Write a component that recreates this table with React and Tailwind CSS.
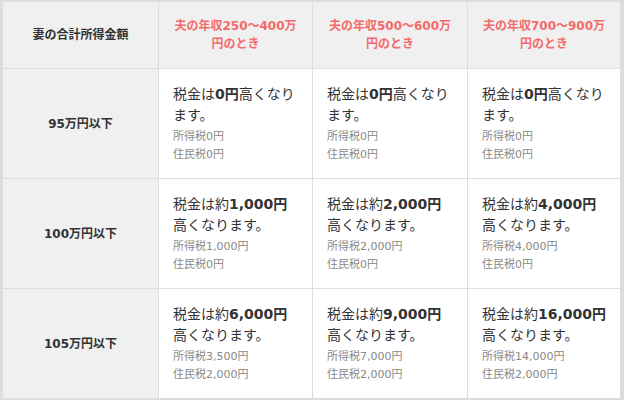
import React from 'react'

const headers = ['夫の年収250～400万', '夫の年収500～600万', '夫の年収700～900万']

const rows = [
  {
    label: '95万円以下',
    cells: [
      { pre: '税金は', amount: '0円', rest: '高くなり', line2: 'ます。', income: '0円', resident: '0円' },
      { pre: '税金は', amount: '0円', rest: '高くなり', line2: 'ます。', income: '0円', resident: '0円' },
      { pre: '税金は', amount: '0円', rest: '高くなり', line2: 'ます。', income: '0円', resident: '0円' },
    ],
  },
  {
    label: '100万円以下',
    cells: [
      { pre: '税金は約', amount: '1,000円', rest: '', line2: '高くなります。', income: '1,000円', resident: '0円' },
      { pre: '税金は約', amount: '2,000円', rest: '', line2: '高くなります。', income: '2,000円', resident: '0円' },
      { pre: '税金は約', amount: '4,000円', rest: '', line2: '高くなります。', income: '4,000円', resident: '0円' },
    ],
  },
  {
    label: '105万円以下',
    cells: [
      { pre: '税金は約', amount: '6,000円', rest: '', line2: '高くなります。', income: '3,500円', resident: '2,000円' },
      { pre: '税金は約', amount: '9,000円', rest: '', line2: '高くなります。', income: '7,000円', resident: '2,000円' },
      { pre: '税金は約', amount: '16,000円', rest: '', line2: '高くなります。', income: '14,000円', resident: '2,000円' },
    ],
  },
]

const TaxCell = ({ cell }) => (
  <div className="bg-white flex items-center pl-[14px]">
    <div className="whitespace-nowrap">
      <p className="text-[14px] leading-[21px] text-[#333]">
        {cell.pre}
        <span className="font-bold">{cell.amount}</span>
        {cell.rest}
      </p>
      <p className="text-[14px] leading-[21px] text-[#333]">{cell.line2}</p>
      <div className="mt-[2px]">
        <p className="text-[11px] leading-[18px] text-[#888]">所得税{cell.income}</p>
        <p className="text-[11px] leading-[18px] text-[#888]">住民税{cell.resident}</p>
      </div>
    </div>
  </div>
)

export default function App() {
  return (
    <div
      className="w-[624px] h-[400px] bg-white"
      style={{ fontFamily: '"DejaVu Sans", "Noto Sans CJK JP", sans-serif' }}
    >
      <div className="grid grid-cols-[155px_153px_154px_152px] grid-rows-[66px_109px_109px_109px] gap-px bg-[#dddddd] border-[#dddddd] border-t-2 border-l-[3px] border-r-4 border-b-2">
        <div className="bg-[#f0f0f0] flex items-center justify-center">
          <span className="text-[12px] font-bold text-[#333]">妻の合計所得金額</span>
        </div>
        {headers.map((h) => (
          <div key={h} className="bg-[#f0f0f0] flex items-center justify-center text-center">
            <p className="text-[12px] leading-[18px] font-bold text-[#f56b6b]">
              {h}
              <br />
              円のとき
            </p>
          </div>
        ))}

        {rows.map((row) => (
          <React.Fragment key={row.label}>
            <div className="bg-[#f0f0f0] flex items-center justify-center">
              <span className="text-[12px] font-bold text-[#333]">{row.label}</span>
            </div>
            {row.cells.map((cell, i) => (
              <TaxCell key={i} cell={cell} />
            ))}
          </React.Fragment>
        ))}
      </div>
    </div>
  )
}
